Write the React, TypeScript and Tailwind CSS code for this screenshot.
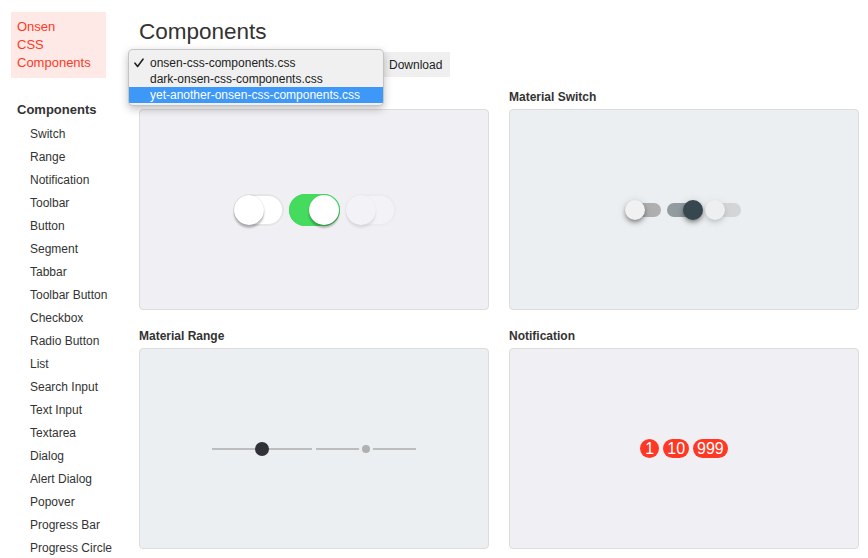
import React from "react";

const navItems = [
  "Switch",
  "Range",
  "Notification",
  "Toolbar",
  "Button",
  "Segment",
  "Tabbar",
  "Toolbar Button",
  "Checkbox",
  "Radio Button",
  "List",
  "Search Input",
  "Text Input",
  "Textarea",
  "Dialog",
  "Alert Dialog",
  "Popover",
  "Progress Bar",
  "Progress Circle",
];

function IosSwitch({ on, disabled }: { on?: boolean; disabled?: boolean }) {
  return (
    <div
      className={
        "relative w-[51px] h-[32px] rounded-[30px] " +
        (on
          ? "bg-[#44db5e] shadow-[inset_0_0_0_2px_#44db5e]"
          : "bg-white shadow-[inset_0_0_0_2px_#e5e5e5]") +
        (disabled ? " opacity-30" : "")
      }
    >
      <div
        className={
          "absolute top-[1px] w-[30px] h-[30px] rounded-full bg-white shadow-[0_0_1px_0_rgba(0,0,0,0.25),0_3px_2px_rgba(0,0,0,0.25)] " +
          (on ? "left-[20px]" : "left-[1px]")
        }
      />
    </div>
  );
}

function MatSwitch({ on, disabled }: { on?: boolean; disabled?: boolean }) {
  return (
    <div className={"relative w-[38px] h-[20px]" + (disabled ? " opacity-40" : "")}>
      <div
        className={
          "absolute left-[2px] top-[3px] w-[34px] h-[14px] rounded-[7px] " +
          (on ? "bg-[rgba(55,71,79,0.5)]" : "bg-[#b0afaf]")
        }
      />
      <div
        className={
          "absolute top-0 w-[20px] h-[20px] rounded-full shadow-[0_4px_5px_0_rgba(0,0,0,0.14),0_1px_10px_0_rgba(0,0,0,0.12),0_2px_4px_-1px_rgba(0,0,0,0.4)] " +
          (on ? "left-[18px] bg-[#37474f]" : "left-0 bg-[#f1f1f1]")
        }
      />
    </div>
  );
}

function MatRange({ disabled }: { disabled?: boolean }) {
  return (
    <div className="relative w-[100px] h-[14px]">
      <div className="absolute left-0 right-0 top-[6px] h-[2px] bg-[#bdbdbd]" />
      {disabled ? (
        <div className="absolute left-[43px] top-0 w-[14px] h-[14px] rounded-full bg-[#b0b0b0] border-[3px] border-[#eceff1]" />
      ) : (
        <div className="absolute left-[43px] top-0 w-[14px] h-[14px] rounded-full bg-[#31313a]" />
      )}
    </div>
  );
}

function Badge({ n }: { n: string }) {
  return (
    <span className="inline-block min-w-[19px] h-[19px] leading-[19px] px-[4px] rounded-[19px] bg-[#fe3824] text-white text-[16px] text-center">
      {n}
    </span>
  );
}

function Panel({
  title,
  bg,
  children,
}: {
  title?: string;
  bg: string;
  children: React.ReactNode;
}) {
  return (
    <div>
      <div className="h-[14px] leading-[14px] text-[12px] font-bold text-[#333] mb-[5px]">{title}</div>
      <div
        className={
          "h-[201px] rounded-[4px] border border-[#dcdcdc] flex items-center justify-center " + bg
        }
      >
        {children}
      </div>
    </div>
  );
}

export default function App() {
  return (
    <div
      className="relative w-[868px] h-[558px] overflow-hidden bg-white flex text-[#333]"
      style={{ fontFamily: '"Liberation Sans", Arial, sans-serif' }}
    >
      {/* Sidebar */}
      <div className="w-[139px] shrink-0 pt-[12px]">
        <div className="ml-[11px] w-[95px] h-[66px] bg-[#ffe9e7] pt-[6px] pl-[6px] text-[13px] leading-[18px] text-[#fe3824]">
          <div>Onsen</div>
          <div>CSS</div>
          <div>Components</div>
        </div>
        <div className="mt-[22px] pl-[17px] text-[13px] font-bold leading-[20px] h-[20px]">Components</div>
        <div className="mt-[3px]">
          {navItems.map((t) => (
            <div key={t} className="pl-[30px] h-[23px] leading-[23px] text-[12px] text-[#333]">
              {t}
            </div>
          ))}
        </div>
      </div>

      {/* Main */}
      <div className="flex-1 pt-[18px] pr-[9px]">
        <div className="h-[28px] leading-[28px] text-[22.5px] text-[#333]">Components</div>
        <div className="mt-[6px] h-[25px] flex items-center">
          <div className="w-[245px] h-[20px] rounded-[4px] border border-[#ccc] bg-white" />
          <div className="h-[25px] w-[66px] bg-[#efefef] text-[12px] leading-[25px] pt-[1px] pl-[5px] text-[#222]">
            Download
          </div>
        </div>
        <div className="mt-[13px] grid grid-cols-2 gap-x-[20px] gap-y-[19px]">
          <Panel bg="bg-[#efeff4]">
            <div className="flex gap-[5px]">
              <IosSwitch />
              <IosSwitch on />
              <IosSwitch disabled />
            </div>
          </Panel>
          <Panel title="Material Switch" bg="bg-[#eceff1]">
            <div className="flex gap-[2px]">
              <MatSwitch />
              <MatSwitch on />
              <MatSwitch disabled />
            </div>
          </Panel>
          <Panel title="Material Range" bg="bg-[#eceff1]">
            <div className="flex gap-[4px]">
              <MatRange />
              <MatRange disabled />
            </div>
          </Panel>
          <Panel title="Notification" bg="bg-[#efeff4]">
            <div className="flex gap-[4px]">
              <Badge n="1" />
              <Badge n="10" />
              <Badge n="999" />
            </div>
          </Panel>
        </div>
      </div>

      {/* Open select dropdown */}
      <div className="absolute left-[128px] top-[49px] w-[256px] h-[57px] rounded-[5px] bg-[#f0f0f0] border border-[rgba(0,0,0,0.18)] shadow-[0_3px_8px_rgba(0,0,0,0.25)] pt-[5px] text-[12px] text-[#222] overflow-hidden">
        <div className="relative h-[16px] leading-[16px] pl-[21px]">
          <svg
            className="absolute left-[5px] top-[3px]"
            width="10"
            height="10"
            viewBox="0 0 10 10"
          >
            <path d="M1 5.2 L3.6 8.4 L9 1.2" fill="none" stroke="#222" strokeWidth="1.6" strokeLinecap="round" strokeLinejoin="round" />
          </svg>
          onsen-css-components.css
        </div>
        <div className="h-[16px] leading-[16px] pl-[21px]">dark-onsen-css-components.css</div>
        <div className="h-[16px] leading-[16px] pl-[21px] bg-[#3d98f8] text-white">
          yet-another-onsen-css-components.css
        </div>
      </div>
    </div>
  );
}
